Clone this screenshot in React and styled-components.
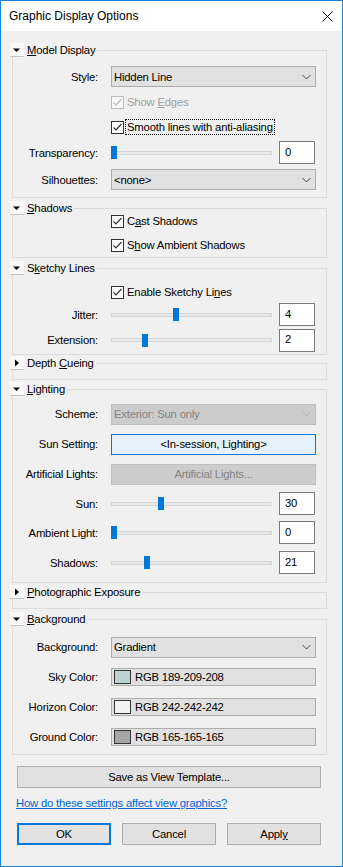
import React from "react";
import styled, { createGlobalStyle } from "styled-components";

const GlobalStyle = createGlobalStyle`
  html, body { margin:0; padding:0; background:#f0f0f0; }
  * { box-sizing:border-box; }
`;

const Window = styled.div`
  width:343px;
  height:867px;
  border:1px solid #1883d7;
  background:#f0f0f0;
  display:flex;
  flex-direction:column;
  font-family:"Liberation Sans", Arial, sans-serif;
  font-size:11.3px;
  letter-spacing:-0.2px;
  color:#000;
`;
const TitleBar = styled.div`
  height:30px;
  flex:none;
  background:#fff;
  display:flex;
  align-items:center;
  justify-content:space-between;
  padding:0 9px 0 8px;
  font-size:12px;
  letter-spacing:0;
`;
const Body = styled.div`
  padding:12px 0 0 11px;
  display:flex;
  flex-direction:column;
`;

const Group = styled.section`
  width:315px;
  margin-top:${p => p.$mt || 0}px;
`;
const GroupHead = styled.div`
  position:relative;
  z-index:1;
  display:flex;
  align-items:center;
  height:14px;
  margin:0 0 -7px -2px;
`;
const Toggle = styled.span`
  width:14px;
  height:14px;
  background:#f9f9f9;
  border-bottom:1px solid #c4c4c4;
  display:flex;
  align-items:center;
  justify-content:center;
`;
const GroupTitle = styled.span`
  background:#f0f0f0;
  padding:0 2px 0 3px;
  line-height:14px;
`;
const Frame = styled.div`
  border:1px solid #dcdcdc;
  padding:${p => p.$pt || 0}px 0 ${p => p.$pb || 0}px 0;
  min-height:${p => p.$minh || 0}px;
`;
const Row = styled.div`
  display:grid;
  grid-template-columns:85px 205px;
  column-gap:13px;
  align-items:center;
  height:${p => p.$h}px;
`;
const Label = styled.span`
  text-align:right;
  white-space:nowrap;
`;

const Select = styled.div`
  height:21px;
  border:1px solid ${p => (p.$disabled ? "#bfbfbf" : "#adadad")};
  background:${p => (p.$disabled ? "#cccccc" : "#e1e1e1")};
  color:${p => (p.$disabled ? "#838383" : "#000")};
  display:flex;
  align-items:center;
  justify-content:space-between;
  padding:0 4px 0 2px;
`;

const CheckRow = styled.div`
  display:flex;
  align-items:center;
  gap:2px;
  color:${p => (p.$disabled ? "#a0a0a0" : "#000")};
`;
const Box = styled.span`
  width:13px;
  height:13px;
  border:1px solid ${p => (p.$disabled ? "#bcbcbc" : "#333")};
  background:${p => (p.$disabled ? "#f7f7f7" : "#fff")};
  display:flex;
  align-items:center;
  justify-content:center;
`;
const CheckText = styled.span`
  padding:1px 1px;
  outline:${p => (p.$focus ? "1px dotted #000" : "none")};
  white-space:nowrap;
`;

const SliderLine = styled.div`
  display:flex;
  align-items:center;
  gap:7px;
`;
const Slider = styled.div`
  position:relative;
  width:161px;
  height:13px;
  display:flex;
  align-items:center;
`;
const Track = styled.div`
  width:100%;
  height:4px;
  background:#e7eaea;
  border:1px solid #d6d6d6;
`;
const Thumb = styled.span`
  position:absolute;
  top:0;
  width:6px;
  height:13px;
  background:#0078d7;
`;
const NumBox = styled.div`
  width:36px;
  height:23px;
  border:1px solid #7a7a7a;
  background:#fff;
  display:flex;
  align-items:center;
  padding:0 5px 2px;
`;

const Button = styled.div`
  height:${p => p.$h || 21}px;
  border:${p => (p.$primary ? "2px solid #0078d7" : `1px solid ${p.$accent ? "#0078d7" : p.$disabled ? "#bfbfbf" : "#adadad"}`)};
  background:${p => (p.$accent ? "#e5f1fb" : p.$disabled ? "#cccccc" : "#e1e1e1")};
  color:${p => (p.$disabled ? "#838383" : "#000")};
  display:flex;
  align-items:center;
  justify-content:center;
  width:${p => (p.$w ? p.$w + "px" : "auto")};
`;

const ColorField = styled.div`
  height:18px;
  border:1px solid #adadad;
  background:#e1e1e1;
  display:flex;
  align-items:center;
  padding-left:2px;
  gap:4px;
`;
const Swatch = styled.span`
  width:17px;
  height:14px;
  border:1px solid #333;
  background:${p => p.$c};
`;

const Footer = styled.div`
  margin-left:5px;
  width:304px;
  display:flex;
  flex-direction:column;
`;
const HelpLink = styled.a`
  margin:7px 0 0 -1px;
  color:#0066cc;
  text-decoration:underline;
  line-height:16px;
  cursor:pointer;
`;
const ButtonRow = styled.div`
  margin-top:12px;
  display:flex;
  gap:11px;
`;

const Tri = ({ open }) => (
  <svg width="8" height="8" viewBox="0 0 8 8">
    {open ? <path d="M0 2.5h7L3.5 6z" fill="#000" /> : <path d="M2 0.5v7L6 4z" fill="#000" />}
  </svg>
);

const Chevron = ({ color = "#444" }) => (
  <svg width="9" height="6" viewBox="0 0 9 6">
    <path d="M0.5 1L4.5 5L8.5 1" fill="none" stroke={color} strokeWidth="1" />
  </svg>
);

const Tick = ({ color }) => (
  <svg width="11" height="11" viewBox="0 0 11 11">
    <path d="M1.5 5.5L4 8L9.5 2" fill="none" stroke={color} strokeWidth="1.2" />
  </svg>
);

const Section = ({ title, open, mt, pt, pb, children }) => (
  <Group $mt={mt}>
    <GroupHead>
      <Toggle><Tri open={open} /></Toggle>
      <GroupTitle>{title}</GroupTitle>
    </GroupHead>
    <Frame $pt={pt} $pb={pb} $minh={open ? 0 : 17}>{children}</Frame>
  </Group>
);

const Check = ({ children, disabled, focus }) => (
  <CheckRow $disabled={disabled}>
    <Box $disabled={disabled}><Tick color={disabled ? "#bcbcbc" : "#333"} /></Box>
    <CheckText $focus={focus}>{children}</CheckText>
  </CheckRow>
);

const Range = ({ value, max }) => (
  <SliderLine>
    <Slider>
      <Track />
      <Thumb style={{ left: Math.round((value / max) * 155) }} />
    </Slider>
    <NumBox>{value}</NumBox>
  </SliderLine>
);

const Dropdown = ({ children, disabled }) => (
  <Select $disabled={disabled}>
    <span>{children}</span>
    <Chevron color={disabled ? "#b0b0b0" : "#444"} />
  </Select>
);

const ColorPick = ({ c, children }) => (
  <ColorField>
    <Swatch $c={c} />
    <span>{children}</span>
  </ColorField>
);

export default function App() {
  return (
    <>
      <GlobalStyle />
      <Window>
        <TitleBar>
          <span>Graphic Display Options</span>
          <svg width="11" height="11" viewBox="0 0 11 11">
            <path d="M0.5 0.5L10.5 10.5M10.5 0.5L0.5 10.5" stroke="#000" strokeWidth="1" />
          </svg>
        </TitleBar>
        <Body>
          <Section open title={<><u>M</u>odel Display</>} pt={13} pb={4}>
            <Row $h={25}><Label>Style:</Label><Dropdown>Hidden Line</Dropdown></Row>
            <Row $h={26}><span /><Check disabled>Show <u>E</u>dges</Check></Row>
            <Row $h={24}><span /><Check focus>Smooth lines with anti-aliasing</Check></Row>
            <Row $h={27}><Label>Transparency:</Label><Range value={0} max={100} /></Row>
            <Row $h={27}><Label>Silhouettes:</Label><Dropdown>&lt;none&gt;</Dropdown></Row>
          </Section>

          <Section open mt={3} title={<><u>S</u>hadows</>} pt={0} pb={0}>
            <Row $h={24}><span /><Check>C<u>a</u>st Shadows</Check></Row>
            <Row $h={24}><span /><Check>S<u>h</u>ow Ambient Shadows</Check></Row>
          </Section>

          <Section open mt={3} title={<>S<u>k</u>etchy Lines</>} pt={12} pb={0}>
            <Row $h={22}><span /><Check>Enable Sketchy Li<u>n</u>es</Check></Row>
            <Row $h={23}><Label>Jitter:</Label><Range value={4} max={10} /></Row>
            <Row $h={28}><Label>Extension:</Label><Range value={2} max={10} /></Row>
          </Section>

          <Section mt={1} title={<>Depth <u>C</u>ueing</>} />

          <Section open mt={2} title={<><u>L</u>ighting</>} pt={9} pb={4}>
            <Row $h={30}><Label>Scheme:</Label><Dropdown disabled>Exterior: Sun only</Dropdown></Row>
            <Row $h={30}><Label>Sun Setting:</Label><Button $accent>&lt;In-session, Lighting&gt;</Button></Row>
            <Row $h={30}><Label>Artificial Lights:</Label><Button $disabled>Artificial Lights...</Button></Row>
            <Row $h={29}><Label>Sun:</Label><Range value={30} max={100} /></Row>
            <Row $h={29}><Label>Ambient Light:</Label><Range value={0} max={100} /></Row>
            <Row $h={31}><Label>Shadows:</Label><Range value={21} max={100} /></Row>
          </Section>

          <Section mt={2} title={<><u>P</u>hotographic Exposure</>} />

          <Section open mt={3} title={<><u>B</u>ackground</>} pt={12} pb={2}>
            <Row $h={30}><Label>Background:</Label><Dropdown>Gradient</Dropdown></Row>
            <Row $h={30}><Label>Sky Color:</Label><ColorPick c="rgb(189,209,208)">RGB 189-209-208</ColorPick></Row>
            <Row $h={30}><Label>Horizon Color:</Label><ColorPick c="rgb(242,242,242)">RGB 242-242-242</ColorPick></Row>
            <Row $h={30}><Label>Ground Color:</Label><ColorPick c="rgb(165,165,165)">RGB 165-165-165</ColorPick></Row>
          </Section>

          <Footer>
            <Button $h={22} style={{ marginTop: 11 }}>Save as View Template...</Button>
            <HelpLink>How do these settings affect view graphics?</HelpLink>
            <ButtonRow>
              <Button $h={22} $w={94} $primary>OK</Button>
              <Button $h={22} $w={94}>Cancel</Button>
              <Button $h={22} $w={94}>Appl<u>y</u></Button>
            </ButtonRow>
          </Footer>
        </Body>
      </Window>
    </>
  );
}
